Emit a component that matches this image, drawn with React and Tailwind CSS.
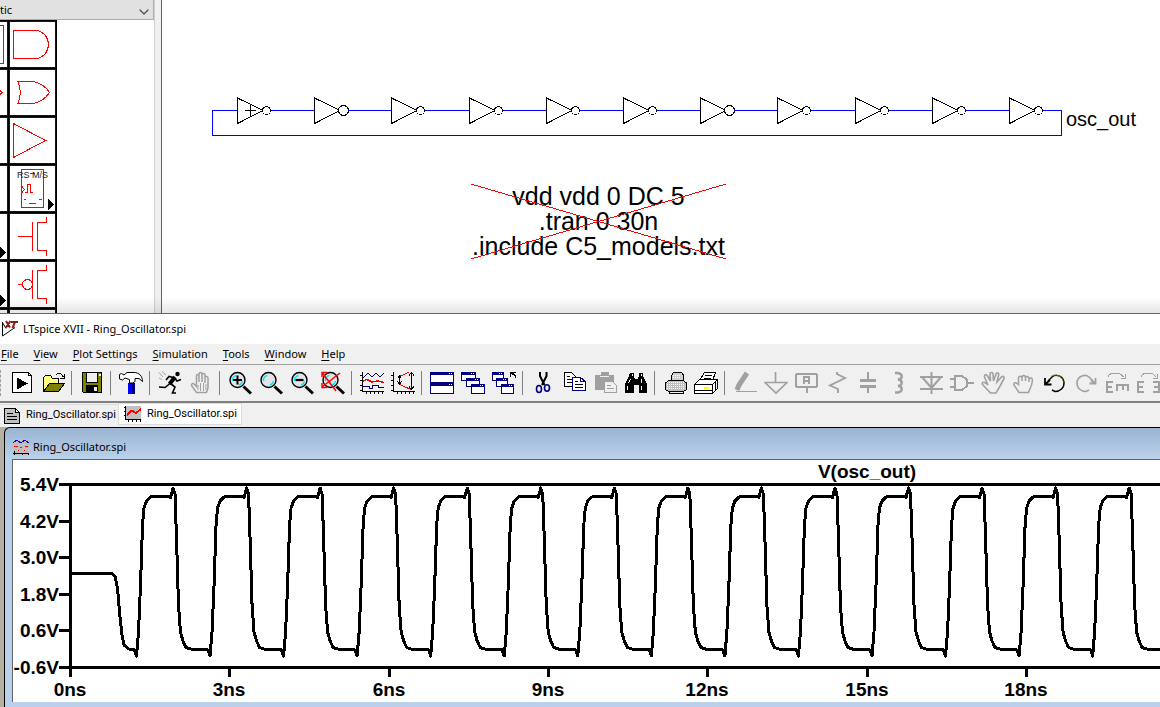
import React from 'react';
import { ChevronDown } from 'lucide-react';

const NAVY = '#000080';
const GREY = '#a0a0a0';

const Icon = ({ children, color = '#000', smooth }) => (
  <svg
    viewBox="0 0 24 24"
    className="h-6 w-6"
    fill="none"
    stroke={color}
    shapeRendering={smooth ? 'auto' : 'crispEdges'}
    aria-hidden="true"
  >
    {children}
  </svg>
);

const Lens = ({ children }) => (
  <Icon smooth>
    <path d="M15.5 15.5L23 22.5" strokeWidth="3" />
    <circle cx="9.5" cy="9" r="7.5" fill="#e4e4e4" strokeWidth="1.4" />
    <path d="M4.5 10a5 5 0 0 1 4-5.500M11 14a5 5 0 0 0 3.500-4" stroke="#00e5ff" strokeWidth="1.5" />
    {children}
  </Icon>
);

const MiniWindow = ({ x, y, w = 12, h = 9 }) => (
  <g stroke={NAVY}>
    <rect x={x + 0.5} y={y + 0.5} width={w} height={h} fill="#fff" />
    <path d={`M${x + 0.5} ${y + 1.5}h${w}M${x + 0.5} ${y + 2.5}h${w}`} />
    <path d={`M${x + w - 4} ${y + 1.5}h1M${x + w - 2} ${y + 1.5}h1`} stroke="#fff" />
  </g>
);

const icons = {
  run: (
    <Icon>
      <path d="M2.500 1.500H18.500L21.500 4.500V21.500H2.500Z" fill="#fff" />
      <path d="M18.500 1.500V4.500H21.500" />
      <path d="M7 6.500L18 12.500L7 18.500Z" fill="#000" stroke="none" />
    </Icon>
  ),
  open: (
    <Icon>
      <path d="M2.500 20V6.500L4.500 4.500H9.500L11.500 7.500H17.500V12" fill="#ffff80" />
      <path d="M2.500 20.500L8.500 12.500H23.500L17.500 20.500Z" fill="#808000" />
      <path d="M14.500 4.500L16.500 2.500H19.500L22.500 6M23.500 3V7.500H19" />
    </Icon>
  ),
  save: (
    <Icon>
      <path d="M2.500 1.500H21.500V21.500H3.500L2.500 20.500Z" fill="#808000" />
      <path d="M6.500 1.500H17.500V11.500H6.500Z" fill="#f0f0f0" />
      <path d="M6 14H18V22H6Z" fill="#000" stroke="none" />
      <path d="M14 16H17V20H14Z" fill="#f0f0f0" stroke="none" />
      <path d="M19 3h2v2h-2z" fill="#f0f0f0" stroke="none" />
    </Icon>
  ),
  hammer: (
    <Icon smooth>
      <path d="M9 12H16V23H9Z" fill="#00f" stroke="none" />
      <path d="M14.500 12V23" stroke={NAVY} strokeWidth="3" />
      <path d="M.5 3.500L2.500 2.500L5 4L8 1.500H15C20 1.500 23.500 5 23.500 10.500L20 7.500L16 7.500V10.500L14 12H10.500V8.500L6 7L3.500 9L.5 8Z" fill="#fff" />
    </Icon>
  ),
  runner: (
    <Icon smooth>
      <circle cx="19.500" cy="3" r="2.200" fill="#000" stroke="none" />
      <path d="M17 6L11.500 13" strokeWidth="4" />
      <path d="M17 7L11 5.500L8 9M17 7.500L19 10L23 8.500M12 12.500L7 16.500L1 16M12.500 12.500L17 16L14.500 22H18" strokeWidth="1.600" />
      <path d="M1 1.500L5 6M4 .5L8 4M1 7L4 8.500" stroke={GREY} />
    </Icon>
  ),
  stop: (
    <Icon color={GREY} smooth>
      <path d="M7.500 21.500L2.500 14.500C2 12.500 4 12 5.500 13.500L7.500 15.500V5C7.500 3 10 3 10 5V11V3C10 1 13 1 13 3V11V4C13 2 16 2 16 4V12V6.500C16 5 19 5 19 7V17L17.500 21.500Z" strokeWidth="1.500" />
      <path d="M11.500 12V20M14.500 12V20M9 14V19M17 13V19" strokeWidth="1" />
    </Icon>
  ),
  zoomIn: <Lens><path d="M5 9H14M9.500 4.500V13.500" strokeWidth="2" /></Lens>,
  zoomArea: <Lens />,
  zoomOut: <Lens><path d="M5.500 9H13.500" strokeWidth="2.200" /></Lens>,
  zoomFit: <Lens><path d="M1 1.500L15 20M19 2L1 16M1 6V1.500H6M1 12V16.500H6" stroke="#f00" strokeWidth="1.500" /></Lens>,
  autorange: (
    <Icon>
      <path d="M2.500 1V20.500H24M0 4.500H2M0 9.500H2M0 14.500H2M0 19.500H2M6.500 21V23M10.500 21V23M14.500 21V23M18.500 21V23M22.500 21V23" />
      <path d="M3 7L8 2L12 6L16 2L20 6L24 2M3 15.500H9V17.500H12V14.500H18V16.500H24" stroke={NAVY} />
      <path d="M3 10L7 8.500L12 11L18 10L24 11.500" stroke="#f00" strokeWidth="1.500" />
    </Icon>
  ),
  toggle: (
    <Icon>
      <path d="M2.500 1V20.500H24M0 4.500H2M0 9.500H2M0 14.500H2M0 19.500H2M6.500 21V23M10.500 21V23M14.500 21V23M18.500 21V23M22.500 21V23" />
      <path d="M18 1L8.500 5.500M8.500 13.500L20 18.500" stroke="#f00" />
      <path d="M8.500 5V13M6.500 7.500L8.500 5L10.500 7.500M6.500 10.500L8.500 13L10.500 10.500M20.500 1V19M18 4.500L20.500 1.500L23 4.500M18 15.500L20.500 18.500L23 15.500" />
    </Icon>
  ),
  tile: (
    <Icon>
      <MiniWindow x={0} y={1} w={23} h={10} />
      <MiniWindow x={0} y={12} w={23} h={10} />
    </Icon>
  ),
  cascade: (
    <Icon>
      <MiniWindow x={0} y={1} w={14} h={8} />
      <MiniWindow x={5} y={7} w={13} h={8} />
      <MiniWindow x={10} y={13} w={13} h={9} />
    </Icon>
  ),
  closeAll: (
    <Icon>
      <MiniWindow x={0} y={1} w={11} h={8} />
      <MiniWindow x={4} y={7} w={11} h={8} />
      <MiniWindow x={9} y={13} w={12} h={9} />
      <path d="M23.500 7V5L19 1.500M18.500 6V1.500H23.500" strokeWidth="1.500" />
    </Icon>
  ),
  cut: (
    <Icon smooth>
      <path d="M9 1V5L13.500 14M15.500 1V5L11 14" strokeWidth="2" />
      <ellipse cx="8" cy="18" rx="2.500" ry="3.500" stroke={NAVY} strokeWidth="1.600" />
      <ellipse cx="16" cy="17" rx="2.500" ry="3.200" stroke={NAVY} strokeWidth="1.600" />
    </Icon>
  ),
  copy: (
    <Icon>
      <path d="M2.500 1.500H9.500L13.500 5.500V15.500H2.500Z" fill="#fff" />
      <path d="M4.500 5.500H8M4.500 8.500H10M4.500 11.500H10" />
      <path d="M10.500 6.500H18.500L23.500 10.500V19.500H10.500Z" fill="#fff" stroke={NAVY} />
      <path d="M18.500 6.500V10.500H23.500" stroke={NAVY} />
      <path d="M13 10.500H16M13 13.500H21M13 16.500H21" />
    </Icon>
  ),
  paste: (
    <Icon color={GREY}>
      <path d="M2 4H8V1H16V4H21V19H2Z" fill={GREY} stroke="none" />
      <path d="M7 5.500H16" stroke="#f0f0f0" />
      <path d="M11.500 10.500H19.500L23.500 14.500V21.500H11.500Z" fill="#f0f0f0" />
      <path d="M14 14.500H18M14 17.500H21" />
    </Icon>
  ),
  find: (
    <Icon>
      <path d="M6 2H10V5L11 8H14L15 5V2H19V5L23 13V22H15V14H10V22H1V13L5 5Z" fill="#000" stroke="none" />
      <path d="M8.500 3V5M17.500 3V5M6.500 8L4.500 12M17.500 8V12M3.500 15V19M17.500 15V19" stroke="#f0f0f0" />
    </Icon>
  ),
  printer: (
    <Icon>
      <path d="M8.500 10V4.500L10.500 1.500H18.500L20.500 4V10" fill="#d0d0d0" />
      <path d="M2.500 18.500V12L5.500 9.500H20.500L23.500 12V18.500L20.500 20.500H5.500Z" fill="#c0c0c0" />
      <path d="M6.500 20.500V22.500H20.500V20.500M6 9.500H20" />
      <path d="M4 13.500H22M4 11.500H22M4 15.500H22M4 17.500H22M10 6.500H18M10 4.500H18" stroke="#fff" strokeDasharray="1 1" />
    </Icon>
  ),
  print: (
    <Icon>
      <path d="M5.500 9.500L10.500 1.500H21.500L18.500 9.500" fill="#fff" />
      <path d="M11 4.500H18M9.500 7H16.500" />
      <path d="M.5 13.500L5.500 8.500H23.500L18.500 13.500Z" fill="#fff" />
      <path d="M.5 13.500H18.500V22.500H.5ZM18.500 13.500L23.500 8.500V17.500L18.500 22.500" fill="#fff" />
      <path d="M1 19.500H18M21.500 11V20" />
      <path d="M10 16.500H15" stroke="#ff0" strokeWidth="2" />
    </Icon>
  ),
  wire: (
    <Icon color={GREY} smooth>
      <path d="M14 2L6 14L4 19" strokeWidth="5" />
      <path d="M3 20.500H24" />
    </Icon>
  ),
  ground: (
    <Icon color={GREY} smooth>
      <path d="M11.500 1V11.500M1 11.500H23L12 22Z" strokeWidth="1.700" />
    </Icon>
  ),
  label: (
    <Icon color={GREY}>
      <rect x="1" y="3" width="21" height="13" rx="2" strokeWidth="2" />
      <path d="M9 13V6H14V13M9 10H14" strokeWidth="2" />
      <path d="M11.500 16V22" strokeWidth="2" />
    </Icon>
  ),
  resistor: (
    <Icon color={GREY} smooth>
      <path d="M11 1V3L19 7L4 14.500L12 18V22" strokeWidth="1.900" />
    </Icon>
  ),
  capacitor: (
    <Icon color={GREY}>
      <path d="M11 1V9M11 15V22" strokeWidth="2" />
      <path d="M3 9.500H19M3 15.500H19" strokeWidth="3" />
    </Icon>
  ),
  inductor: (
    <Icon color={GREY} smooth>
      <path d="M7 2H10C15 3 15 8 10 8.500C15 9 15 14.500 10 15C15 15.500 15 20.500 10 21.500H7" strokeWidth="2.400" />
    </Icon>
  ),
  diode: (
    <Icon color={GREY} smooth>
      <path d="M12.500 1V23M1 6H24M1 18H24M3 6L12.500 17L22 6" strokeWidth="2" />
    </Icon>
  ),
  component: (
    <Icon color={GREY}>
      <path d="M5 5H12L17 8.500V15L12 19H5ZM0 8H5M0 16H5M17 12H24" strokeWidth="2" />
    </Icon>
  ),
  move: (
    <Icon color={GREY} smooth>
      <path d="M9.500 22L2 14C0 11.500 2.500 10.500 4.500 12L7 14L3.500 6C3 3.500 5.500 3 6.500 5L9.500 10L9 3C9 1 12 1 12 3L12.500 10L15 3C16 1 18.500 2 17.500 4.500L16 11L20.500 6C22.500 4.500 24 6.500 22.500 8.500L18.500 16L15 22Z" strokeWidth="1.600" />
    </Icon>
  ),
  drag: (
    <Icon color={GREY} smooth>
      <path d="M7 21.500L2 14C1 12 3.500 11 5 12.500L6.500 13.500V7C7 4.500 9.500 4.500 10 7C10 3.500 13.500 3.500 13.500 7C14 4.500 17 5 17 8C18 6 20.500 7 20.500 9.500L19.500 14L16.500 21.500ZM10 7V10M13.500 7V10M17 8V11" strokeWidth="1.500" />
    </Icon>
  ),
  undo: (
    <Icon smooth>
      <path d="M5 10L9 6C13 2.500 20 5 21 11C21.500 17 17 20.500 12 20.500L9 19" strokeWidth="1.400" />
      <path d="M8 5.500C13 2 19 5 20 10" stroke="#808000" />
      <path d="M2 7V13.500H8.500M2.500 13L7 9" strokeWidth="1.800" />
    </Icon>
  ),
  redo: (
    <Icon color={GREY} smooth>
      <path d="M19 10L15 6C11 2.500 4 5 3 11C2.500 17 7 20.500 12 20.500L15 19" strokeWidth="1.600" />
      <path d="M21.500 7V12.500H15.500M21 12.500L17 9" strokeWidth="1.800" />
    </Icon>
  ),
  rotate: (
    <Icon color={GREY}>
      <path d="M3.500 6V4.500L7 2H14L19.500 6.500M20.500 2.500V7H16" />
      <path d="M8 11H2V21H8M2 16H7" strokeWidth="2" />
      <path d="M12 20V14H23V20M18 14V19" strokeWidth="2" />
    </Icon>
  ),
  mirror: (
    <Icon color={GREY}>
      <path d="M5.500 6V4.500L9 2H16L20.500 6.500M21.500 2.500V7H17" />
      <path d="M8 11H2V21H8M2 16H7" strokeWidth="2" />
      <path d="M17 11H23V21H17M23 16H18" strokeWidth="2" />
    </Icon>
  ),
};

const toolbar = [
  ['run', 'open'],
  ['save'],
  ['hammer'],
  ['runner', 'stop'],
  ['zoomIn', 'zoomArea', 'zoomOut', 'zoomFit'],
  ['autorange', 'toggle'],
  ['tile', 'cascade', 'closeAll'],
  ['cut', 'copy', 'paste', 'find'],
  ['printer', 'print'],
  ['wire', 'ground', 'label', 'resistor', 'capacitor', 'inductor', 'diode', 'component', 'move', 'drag', 'undo', 'redo', 'rotate', 'mirror'],
];

const menus = ['File', 'View', 'Plot Settings', 'Simulation', 'Tools', 'Window', 'Help'];

// Palette drawings, one row per pair of cells
const flyout = <path d="M38 33L44 38.500L38 44Z" fill="#000" stroke="none" />;
const mosfet = <path d="M22.500 8V37M36.500 3V8.500H27.500V36.500H36.500V42" />;
const palette = [
  { name: 'Box', art: <path d="M4.500 3.500H41.500V41.500H4.500Z" /> },
  { name: 'AND', art: <path d="M27 8.500H3.500V36.500H27C34 35 38.500 29 38.500 22.500S34 10 27 8.500" /> },
  { name: 'NOR', art: <path d="M36 22.500L38 20.500L40 22.500L38 24.500Z" /> },
  { name: 'OR', art: <path d="M7 11.500H23C31 13 36 17 39.500 22.500C36 28 31 32 23 33.500H7M8 11.500C11 18 11 27 8 33.500" /> },
  { name: 'Blank', art: null },
  { name: 'Buffer', art: <path d="M3.500 5.500L35.500 22.500L3.500 39.500Z" /> },
  { name: 'Latch', art: null },
  {
    name: 'Flip-flop',
    art: (
      <>
        <path d="M11.500 3.500H33.500V41.500H11.500ZM11.500 20L14.500 23.500L11.500 27M15 26.500H17.500V18.500H20.500V26.500H23M14 33.500H16M29 33.500H32M19 37.500H26M20 7.500H25" />
        <text x="7" y="12" fontSize="9" fill="#222" stroke="none">RS M/S</text>
        {flyout}
      </>
    ),
  },
  { name: 'Transistor', art: flyout },
  { name: 'NMOS', art: <>{mosfet}<path d="M8 22.500H22" /></> },
  { name: 'Transistor P', art: flyout },
  { name: 'PMOS', art: <>{mosfet}<path d="M8 22.500H12" /><circle cx="17.500" cy="22.500" r="5" /></> },
  { name: 'More', art: null },
  { name: 'More MOS', art: <path d="M22.500 3V10" /> },
];

const PalettePanel = () => (
  <div className="flex w-[154px] shrink-0 flex-col bg-white">
    <div className="relative">
      <select
        aria-label="Library"
        className="block h-5 w-full appearance-none border-r border-b border-[#acacb4] bg-[#e1e1e1] font-['Noto_Sans',sans-serif] text-[11px] leading-[18px] text-black"
      >
        <option>tic</option>
      </select>
      <ChevronDown className="pointer-events-none absolute top-1 right-0.5 h-4 w-4 text-[#555]" strokeWidth={2} />
    </div>
    <div className="flex w-[57px] justify-end">
      <div className="grid shrink-0 grid-cols-[47px_47px] gap-px bg-black p-px">
        {palette.map((cell) => (
          <button key={cell.name} aria-label={cell.name} className="h-[47px] w-[47px] border border-[#0000c8] bg-white">
            <svg
              viewBox="0 0 45 45"
              className="h-[45px] w-[45px] font-['Liberation_Sans',sans-serif]"
              fill="none"
              stroke="#f00"
              shapeRendering="crispEdges"
            >
              {cell.art}
            </svg>
          </button>
        ))}
      </div>
    </div>
  </div>
);

const inverters = [237, 314, 391, 469, 546, 623, 700, 777, 855, 932, 1009];

const Schematic = () => (
  <div className="relative flex-1 overflow-hidden bg-white font-['Liberation_Sans',sans-serif] text-black">
    <svg viewBox="162 0 998 314" width="998" height="314" className="max-w-none" fill="none" shapeRendering="crispEdges">
      <path d="M237 110.500H212.500V135.500H1061.500V110.500H1043" stroke="#00f" />
      {inverters.map((x, i) => (
        <g key={x} stroke="#000">
          {i > 0 && <path d={`M${inverters[i - 1] + 34} 110.500H${x}`} stroke="#00f" />}
          <path d={`M${x + 0.5} 98L${x + 26} 110.500L${x + 0.5} 123.500Z`} />
          <circle cx={x + 29.5} cy="110.500" r={i === 1 || i === 6 ? 5 : 4} fill="#fff" />
        </g>
      ))}
      <path d="M245 110.500H256M250.500 105V116" stroke="#000" />
    </svg>
    <span className="absolute top-[107px] left-[904px] text-[20px] leading-[25px]">osc_out</span>
    <div className="absolute top-[184px] left-[309px] w-[255px] text-center text-[25px] leading-[25px] whitespace-nowrap">
      <p>vdd vdd 0 DC 5</p>
      <p>.tran 0 30n</p>
      <p>.include C5_models.txt</p>
      <svg viewBox="0 0 255 75" className="absolute inset-0 h-[75px] w-[255px]" stroke="#f00" shapeRendering="crispEdges">
        <path d="M0 0L255 75M0 75L255 0" />
      </svg>
    </div>
  </div>
);

const xTicks = ['0ns', '3ns', '6ns', '9ns', '12ns', '15ns', '18ns'];
const yTicks = ['5.4V', '4.2V', '3.0V', '1.8V', '0.6V', '-0.6V'];

// One oscillation, as offsets from its trough
const cycle = [
  [0, 656], [2, 632], [4, 585], [6, 525], [7.5, 508], [10, 501], [14, 497], [18, 496], [31, 496], [34, 497.5],
  [36.5, 488], [38.5, 494], [40, 538], [42, 605], [44, 632], [46.5, 641], [49.5, 647.5], [54, 649], [69, 649], [71.500, 650],
];

const waveform = () => {
  const pts = [
    [71, 573.5], [112, 573.5], [115, 576.5], [117.5, 588], [119.5, 612], [122, 635], [124, 645], [128.5, 649], [133, 649], [135, 651],
  ];
  for (let n = 0; n < 14; n++) {
    cycle.forEach(([dx, y]) => pts.push([136.5 + n * 73.55 + dx, y]));
  }
  return pts.map((p) => p.join(',')).join(' ');
};

const Plot = () => (
  <svg
    viewBox="13 460 1147 242"
    width="1147"
    height="242"
    className="max-w-none bg-white font-['Liberation_Sans',sans-serif] text-[19px] font-bold"
    fill="none"
    stroke="#000"
    strokeWidth="3"
  >
    <path d="M1160 484.500H59M70.500 484.500V676M59 667.500H1160" shapeRendering="crispEdges" />
    <polyline points={waveform()} strokeLinejoin="round" shapeRendering="crispEdges" />
    <g fill="#000" stroke="none">
      {yTicks.map((t, i) => (
        <React.Fragment key={t}>
          <rect x="59" y={Math.round(483 + i * 36.6)} width="11" height="3" />
          <text x="59" y={Math.round(491 + i * 36.6)} textAnchor="end">{t}</text>
        </React.Fragment>
      ))}
      {xTicks.map((t, i) => (
        <React.Fragment key={t}>
          <rect x={Math.round(69 + i * 159.3)} y="668" width="3" height="9" />
          <text x={Math.round(70 + i * 159.3)} y="696" textAnchor="middle">{t}</text>
        </React.Fragment>
      ))}
      <text x="867" y="478" textAnchor="middle">V(osc_out)</text>
    </g>
  </svg>
);

const AppLogo = () => (
  <svg viewBox="0 0 16 18" className="h-[18px] w-4" fill="none" aria-hidden="true">
    <path d="M.5 2V16L13 7.500" stroke="#000" />
    <path d="M.5 2.500L4 8.500" stroke="#000" />
    <path d="M4 1L8 7.500M8.500 1L4 7.500M9 2H16M13 2L10.500 8" stroke="#8b1a1a" strokeWidth="2" />
  </svg>
);

export default function App() {
  return (
    <div className="flex h-screen flex-col overflow-hidden bg-[#f0f0f0] text-black">
      <div className="relative flex h-[313px] shrink-0 overflow-hidden">
        <PalettePanel />
        <div className="w-2 shrink-0 border-r border-l border-r-[#646464] border-l-[#d0d0d4] bg-[#f0f0f0]" />
        <Schematic />
        <div className="pointer-events-none absolute inset-x-0 bottom-0 h-4 bg-linear-to-t from-black/10 to-transparent" />
      </div>

      <div className="flex flex-1 flex-col overflow-hidden border-t border-[#646464]">
        <header className="flex h-[30px] shrink-0 items-center gap-[5px] bg-white pl-[2px]">
          <AppLogo />
          <h1 className="font-['Noto_Sans',sans-serif] text-[11px] whitespace-nowrap">LTspice XVII - Ring_Oscillator.spi</h1>
        </header>

        <nav className="flex h-[21px] shrink-0 items-center gap-[15px] border-b border-[#a0a0a0] pl-px font-['Noto_Sans',sans-serif] text-[11px]">
          {menus.map((m) => (
            <button key={m} className="whitespace-nowrap">
              <span className="underline underline-offset-2">{m[0]}</span>
              {m.slice(1)}
            </button>
          ))}
        </nav>

        <div className="flex h-[38px] shrink-0 items-center border-b-2 border-[#808080]" role="toolbar">
          <div className="mr-1 h-[26px] w-[2px] shrink-0 border-l border-dashed border-[#a0a0a0]" />
          {toolbar.map((group, g) => (
            <div key={g} className="flex shrink-0 items-center">
              {g > 0 && <div className="mr-1 ml-[3px] h-6 w-px bg-[#808080]" />}
              {group.map((name) => (
                <button key={name} aria-label={name} className="w-[31px] pl-1">
                  {icons[name]}
                </button>
              ))}
            </div>
          ))}
        </div>

        <div className="flex h-6 shrink-0 items-start font-['Roboto',sans-serif] text-[11px]">
          <button className="mt-px flex h-[22px] w-[118px] items-center gap-[6px] border-t border-[#dcdcdc] pl-1 whitespace-nowrap">
            <svg viewBox="0 0 16 16" className="h-4 w-4 shrink-0" fill="#c0c0c0" stroke="#000" shapeRendering="crispEdges">
              <path d="M.5 .5H11.500L15.500 4.500V15.500H.5ZM11.500 .5V4.500H15.500M3 5.500H9M3 8.500H13M3 11.500H13" />
            </svg>
            Ring_Oscillator.spi
          </button>
          <button className="flex h-[22px] w-[124px] items-center gap-[6px] border border-[#dcdcdc] bg-white pl-[5px] whitespace-nowrap">
            <svg viewBox="0 0 17 16" className="h-4 w-[17px] shrink-0" fill="none" stroke="#000" shapeRendering="crispEdges">
              <path d="M2 0H17V13H2Z" fill="#c0c0c0" stroke="none" />
              <path d="M1.500 0V13.500H17M0 1.500H2M0 5.500H2M0 9.500H2M4.500 14V16M8.500 14V16M12.500 14V16M16.500 14V16" />
              <path d="M3 9L8 4.500L12 7L17 3" stroke="#f00" strokeWidth="2" />
            </svg>
            Ring_Oscillator.spi
          </button>
        </div>

        <main className="flex flex-1 overflow-hidden bg-[#b5b1a2] pl-1">
          <section className="flex flex-1 flex-col overflow-hidden rounded-tl-md border-t border-l border-black bg-linear-to-b from-[#9ab4d1] to-[#b9d1ea] to-[30px] pl-[7px]">
            <header className="flex h-[31px] shrink-0 items-center gap-1 pt-[7px] pl-px">
              <svg viewBox="0 0 16 16" className="h-4 w-4" fill="none" shapeRendering="crispEdges" aria-hidden="true">
                <path d="M0 0H16V16H0Z" fill="#c0c0c0" />
                <path d="M0 4L4 1L8 4L12 1L16 4" stroke="#00f" />
                <path d="M1 7.500H5M7 8.500H9M12 7.500H15M5 11.500H6M11 11.500H12" stroke="#f00" />
                <path d="M0 14.500H16" stroke="#000" />
                <path d="M1.500 12V16M9.500 14V16M15.500 14V16" stroke="#000" />
              </svg>
              <h2 className="font-['Noto_Sans',sans-serif] text-[11px] whitespace-nowrap">Ring_Oscillator.spi</h2>
            </header>
            <div className="overflow-hidden border-t border-l border-[#646464]">
              <Plot />
            </div>
          </section>
        </main>
      </div>
    </div>
  );
}
